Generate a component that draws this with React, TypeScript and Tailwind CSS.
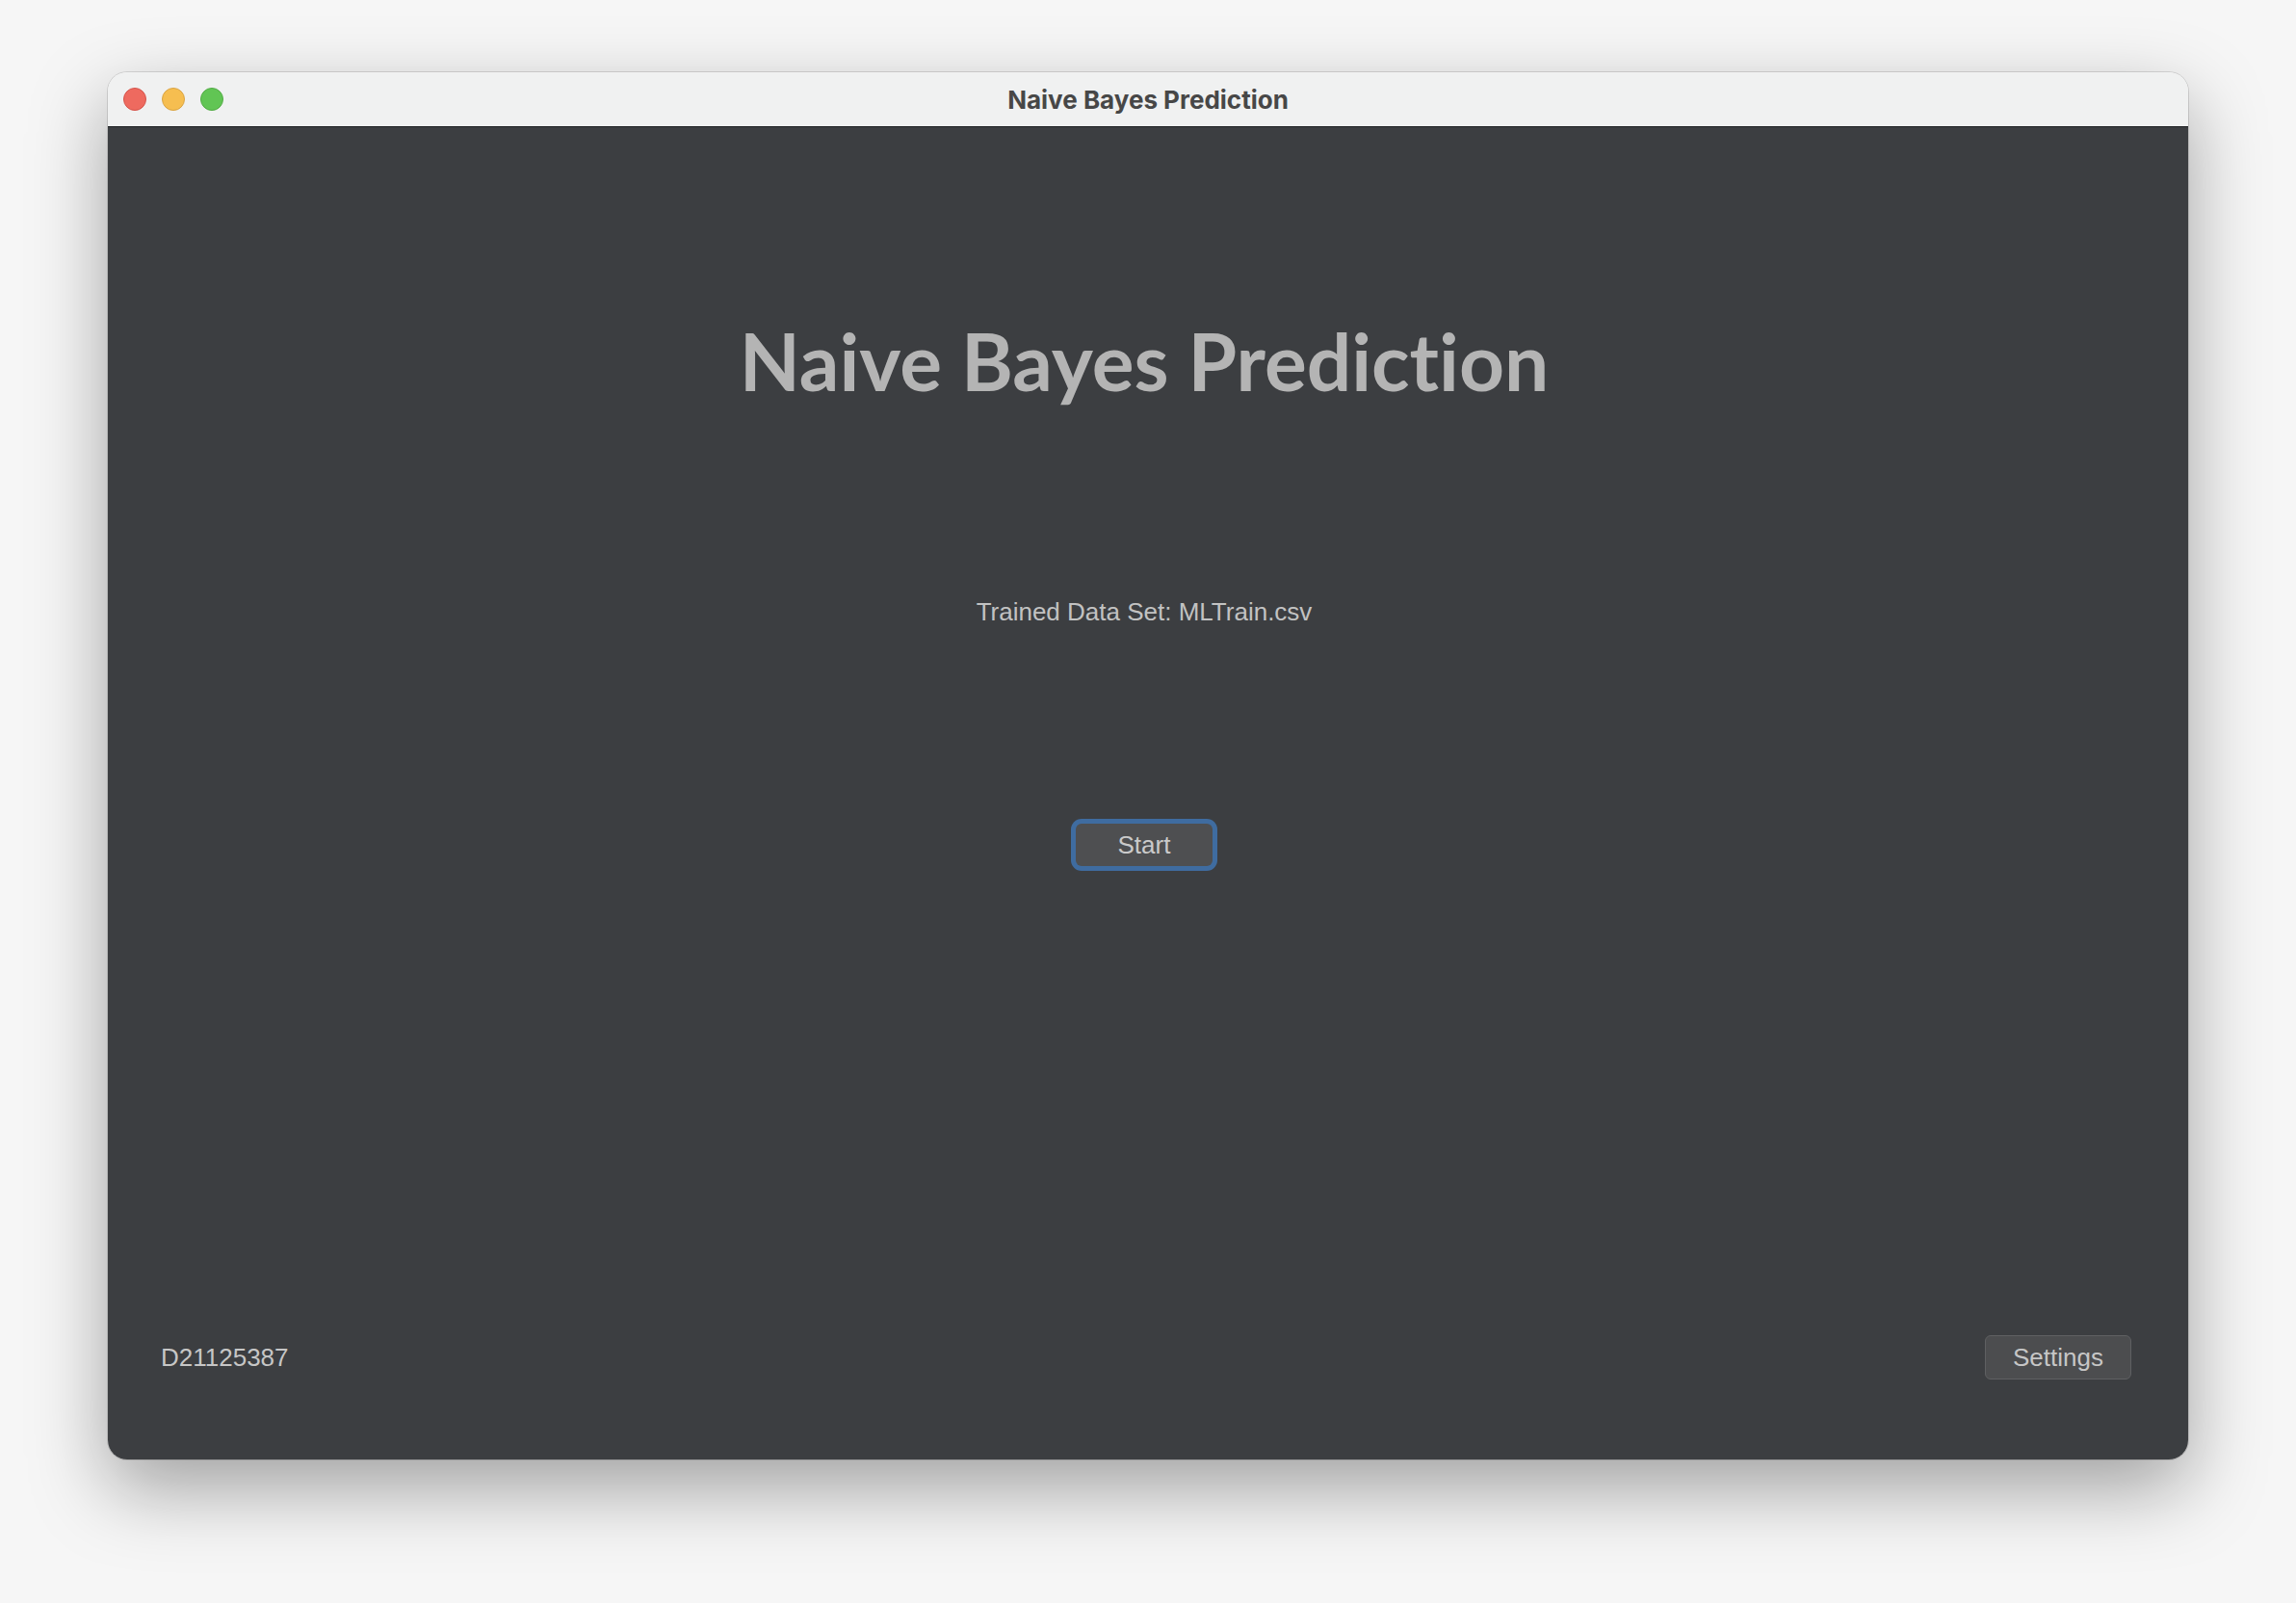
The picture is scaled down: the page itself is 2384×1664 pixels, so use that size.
import React from "react";

function TrafficLights() {
  return (
    <div className="absolute left-[16px] top-0 flex h-full items-center gap-[16px]">
      <span className="h-[24px] w-[24px] rounded-full border border-[#d4544b] bg-[#ee6a5f]" />
      <span className="h-[24px] w-[24px] rounded-full border border-[#d9a444] bg-[#f6be50]" />
      <span className="h-[24px] w-[24px] rounded-full border border-[#53ab46] bg-[#61c554]" />
    </div>
  );
}

export default function App() {
  return (
    <div className="h-[1664px] w-[2384px] overflow-hidden bg-[#f6f6f6] pl-[112px] pt-[75px]">
      <div className="flex h-[1440px] w-[2160px] flex-col overflow-hidden rounded-[20px] shadow-[0_30px_80px_rgba(0,0,0,0.35),0_0_0_1px_rgba(0,0,0,0.12)]">
        {/* Title bar */}
        <div className="relative flex h-[57px] shrink-0 items-center justify-center border-b border-[#1d1f21] bg-[#f0f1f1]">
          <TrafficLights />
          <span className="font-['Inter','Liberation_Sans',sans-serif] text-[26px] font-bold text-[#474747]">
            Naive Bayes Prediction
          </span>
        </div>

        {/* Content */}
        <div className="flex flex-1 flex-col items-center bg-[#3c3e41] pb-[83px] pr-[8px] pt-[201px]">
          <h1 className="font-['Lato','Open_Sans',sans-serif] text-[82px] font-bold leading-none text-[#b4b4b4] [font-variant-ligatures:none]">
            Naive Bayes Prediction
          </h1>

          <p className="mt-[207px] font-['Liberation_Sans','Arial',sans-serif] text-[26px] leading-none text-[#c2c2c2]">
            Trained Data Set: MLTrain.csv
          </p>

          <button className="mt-[207px] flex h-[44px] w-[142px] items-center justify-center rounded-[6px] bg-[#4e4f51] font-['Liberation_Sans','Arial',sans-serif] text-[26px] text-[#cacaca] shadow-[0_0_0_5px_#3f6ca0]">
            Start
          </button>

          <div className="mt-auto flex w-full items-center justify-between pl-[55px] pr-[51px]">
            <span className="font-['Liberation_Sans','Arial',sans-serif] text-[26px] text-[#c6c6c6]">
              D21125387
            </span>
            <button className="flex h-[46px] w-[152px] items-center justify-center rounded-[6px] border border-[#5f6062] bg-[#4c4d4f] font-['Liberation_Sans','Arial',sans-serif] text-[26px] text-[#c6c6c6]">
              Settings
            </button>
          </div>
        </div>
      </div>
    </div>
  );
}
